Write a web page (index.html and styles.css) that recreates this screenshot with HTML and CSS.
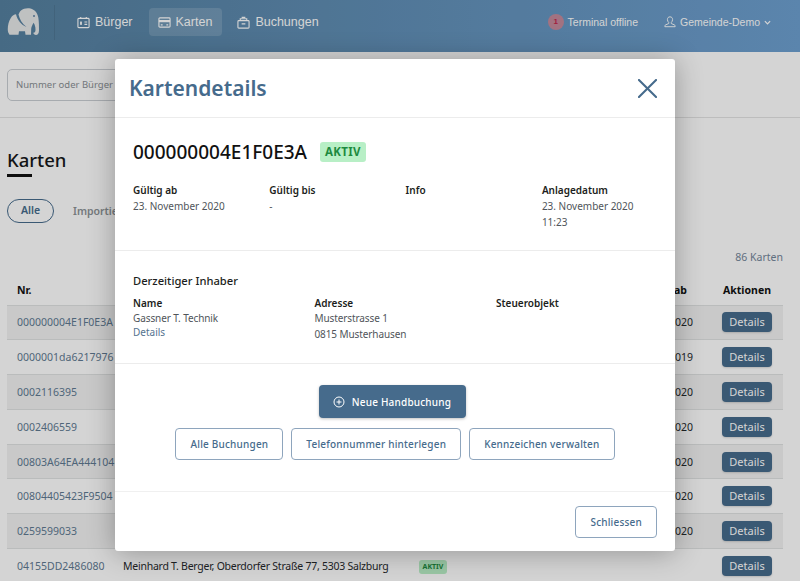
FILE: index.html
```html
<!DOCTYPE html>
<html>
  <head>
    <meta charset="utf-8">
    <title>Karten</title>
    <link rel="stylesheet" href="styles.css">
  </head>
  <body>
    <div class="topbar">
      <svg class="logo" viewBox="0 0 33 28" width="33" height="28">
        <path fill="#e6e8e9" d="M14 2.500C16.500 .5 20 -.3 23.500 .5c4 1 7 4 7.800 9 .7 4.500 .7 9 .7 13 0 3-1.500 4.500-3 4.500s-2.500-1-2.800-2.200c1.500 .3 2.300-1 2.300-3 0-3-.8-5.500-2-7-1.300 2.500-2 4-2.300 6l-.2 6h-5.500l-.5-3.500h-6l-.5 3.500H2.500C1.500 25 .8 24 .8 22c-.2-4 .8-8.500 3-12 1.500-2.500 3.500-3.500 5.200-3.700 1.500 6 5 10.500 10.500 12.700-4.500-3.500-7-8-8-12.500 .6-1.500 1.400-3 2.500-4z"/>
        <circle cx="27" cy="8" r="1" fill="#5f83a3"/>
      </svg>
      <div class="sep"></div>
      <a class="nav">
        <svg viewBox="0 0 14 14" width="13" height="13" fill="none" stroke="currentColor" stroke-width="1.200"><rect x="1" y="2.500" width="12" height="10" rx="1"/><path d="M4 1v2M10 1v2M8 6.500h3M8 9h3"/><rect x="3.300" y="6" width="2" height="3.500" fill="currentColor" stroke="none"/></svg>
        Bürger
      </a>
      <a class="nav active">
        <svg viewBox="0 0 14 14" width="13" height="13" fill="none" stroke="currentColor" stroke-width="1.200"><rect x="1" y="2" width="12" height="10" rx="1"/><path d="M1 5.500h12" stroke-width="2.400"/><path d="M3 9.500h2M9 9.500h2"/></svg>
        Karten
      </a>
      <a class="nav">
        <svg viewBox="0 0 14 14" width="13" height="13" fill="none" stroke="currentColor" stroke-width="1.200"><rect x="1" y="5" width="12" height="8" rx="1"/><path d="M3.500 5V3h7v2M5 1.500h4M5 8.500h4"/></svg>
        Buchungen
      </a>
      <div class="spacer"></div>
      <div class="terminal"><span class="dot">1</span>Terminal offline</div>
      <div class="user">
        <svg viewBox="0 0 14 14" width="12" height="12" fill="none" stroke="currentColor" stroke-width="1.100"><path d="M7 1c2 0 3 1.300 3 3.200 0 1.500-.7 2.600-1.500 3.300v1.300l3.500 1.500c.6.300 1 .7 1 1.200v1H1v-1c0-.5.400-.9 1-1.200l3.500-1.500V7.500C4.700 6.800 4 5.700 4 4.200 4 2.300 5 1 7 1z"/></svg>
        Gemeinde-Demo
        <svg viewBox="0 0 8 8" width="7" height="7" fill="none" stroke="currentColor" stroke-width="1.400"><path d="M1 2.500l3 3 3-3"/></svg>
      </div>
    </div>

    <div class="searchrow">
      <div class="search">Nummer oder Bürger s</div>
    </div>

    <div class="content">
      <h1 class="title">Karten</h1>
      <div class="tabs">
        <span class="tab on">Alle</span>
        <span class="tab">Importiert</span>
      </div>
      <div class="count">86 Karten</div>
      <table class="list">
        <tr><th class="c-nr">Nr.</th><th class="c-name"></th><th class="c-status"></th><th class="c-date">Gültig ab</th><th class="c-act">Aktionen</th></tr>
        <tr><td><a>000000004E1F0E3A</a></td><td></td><td></td><td class="c-date">23.11.2020</td><td class="c-act"><span class="small">Details</span></td></tr>
        <tr><td><a>0000001da6217976</a></td><td></td><td></td><td class="c-date">04.03.2019</td><td class="c-act"><span class="small">Details</span></td></tr>
        <tr><td><a>0002116395</a></td><td></td><td></td><td class="c-date">23.11.2020</td><td class="c-act"><span class="small">Details</span></td></tr>
        <tr><td><a>0002406559</a></td><td></td><td></td><td class="c-date">23.11.2020</td><td class="c-act"><span class="small">Details</span></td></tr>
        <tr><td><a>00803A64EA444104</a></td><td></td><td></td><td class="c-date">23.11.2020</td><td class="c-act"><span class="small">Details</span></td></tr>
        <tr><td><a>00804405423F9504</a></td><td></td><td></td><td class="c-date">23.11.2020</td><td class="c-act"><span class="small">Details</span></td></tr>
        <tr><td><a>0259599033</a></td><td></td><td></td><td class="c-date">23.11.2020</td><td class="c-act"><span class="small">Details</span></td></tr>
        <tr><td><a>04155DD2486080</a></td><td class="owner">Meinhard T. Berger, Oberdorfer Straße 77, 5303 Salzburg</td><td><span class="badge-sm">AKTIV</span></td><td></td><td class="c-act"><span class="small">Details</span></td></tr>
      </table>
    </div>

    <div class="backdrop"></div>

    <div class="modal">
      <div class="modal-head">
        <h2>Kartendetails</h2>
        <svg viewBox="0 0 20 20" width="19" height="19" fill="none" stroke="#466b8c" stroke-width="2.200" stroke-linecap="round"><path d="M1 1l18 18M19 1L1 19"/></svg>
      </div>
      <div class="sec sec-info">
        <div class="cardno"><span>000000004E1F0E3A</span><span class="badge">AKTIV</span></div>
        <div class="grid4">
          <div><b>Gültig ab</b><p>23. November 2020</p></div>
          <div><b>Gültig bis</b><p>-</p></div>
          <div><b>Info</b></div>
          <div><b>Anlagedatum</b><p>23. November 2020<br>11:23</p></div>
        </div>
      </div>
      <div class="sec sec-owner">
        <h3>Derzeitiger Inhaber</h3>
        <div class="grid3">
          <div><b>Name</b><p>Gassner T. Technik</p><a>Details</a></div>
          <div><b>Adresse</b><p>Musterstrasse 1<br>0815 Musterhausen</p></div>
          <div><b>Steuerobjekt</b></div>
        </div>
      </div>
      <div class="sec sec-actions">
        <button class="btn primary">
          <svg viewBox="0 0 12 12" width="12" height="12" fill="none" stroke="currentColor" stroke-width="1"><circle cx="6" cy="6" r="5"/><path d="M6 3.500v5M3.500 6h5"/></svg>
          Neue Handbuchung
        </button>
        <div class="btnrow">
          <button class="btn">Alle Buchungen</button>
          <button class="btn">Telefonnummer hinterlegen</button>
          <button class="btn">Kennzeichen verwalten</button>
        </div>
      </div>
      <div class="modal-foot"><button class="btn">Schliessen</button></div>
    </div>
  </body>
</html>
```

FILE: styles.css
```css
html, body {
  margin: 0;
  padding: 0;
  height: 581px;
  overflow: hidden;
  background: #fff;
  font-family: "Noto Sans", sans-serif;
  font-size: 11px;
  color: #33373b;
}
.topbar {
  height: 52px;
  display: flex;
  align-items: center;
  padding: 0 29px 8px 7px;
  box-sizing: border-box;
  background: linear-gradient(90deg, #55809f, #6ea0d0);
  font-family: "Liberation Sans", sans-serif;
  color: #fff;
}
.logo { flex: none; }
.sep {
  width: 1px;
  height: 35px;
  margin: 0 13px 0 14px;
  background: rgba(0, 0, 0, .08);
}
.nav {
  display: flex;
  align-items: center;
  gap: 5px;
  height: 28px;
  padding: 0 10px 0 9px;
  margin-right: 6px;
  border-radius: 4px;
  font-size: 12.500px;
}
.nav.active { background: rgba(255, 255, 255, .15); }
.spacer { flex: 1; }
.terminal {
  display: flex;
  align-items: center;
  font-size: 10.500px;
  margin-right: 26px;
}
.dot {
  width: 16px;
  height: 16px;
  margin-right: 4px;
  border-radius: 50%;
  background: #c48a9c;
  color: #c2264a;
  font-size: 8px;
  font-weight: bold;
  text-align: center;
  line-height: 16px;
}
.user {
  display: flex;
  align-items: center;
  gap: 4px;
  font-size: 10.500px;
}
.searchrow {
  height: 66px;
  padding: 17px 7px 0;
  box-sizing: border-box;
  border-bottom: 1px solid #e4e4e4;
}
.search {
  width: 300px;
  height: 32px;
  box-sizing: border-box;
  padding-left: 8px;
  border: 1px solid #c9ced3;
  border-radius: 5px;
  line-height: 30px;
  color: #8a8f94;
  font-size: 9.500px;
  white-space: nowrap;
}
.content { padding: 0 17px 0 7px; }
.title {
  display: inline-block;
  margin: 31px 0 0;
  padding-bottom: 7px;
  font-size: 18.500px;
  font-weight: 500;
  line-height: 21px;
  color: #16181a;
  position: relative;
}
.title::after {
  content: "";
  position: absolute;
  left: 0;
  bottom: 0;
  width: 25px;
  height: 3px;
  background: #111;
}
.tabs {
  display: flex;
  align-items: center;
  gap: 19px;
  margin-top: 22px;
  font-weight: 600;
  font-size: 10.500px;
  color: #8d9296;
}
.tab.on {
  width: 47px;
  height: 24px;
  box-sizing: border-box;
  border: 1.500px solid #466b8c;
  border-radius: 12px;
  text-align: center;
  line-height: 21px;
  color: #466b8c;
}
.count {
  margin-top: 27px;
  height: 25px;
  text-align: right;
  font-size: 10.500px;
  line-height: 15px;
  color: #74869a;
}
.list {
  width: 776px;
  border-collapse: collapse;
  table-layout: fixed;
  color: #26292c;
}
.list th {
  height: 30px;
  padding: 0 10px;
  box-sizing: border-box;
  text-align: left;
  font-size: 10.500px;
  font-weight: 700;
  color: #111;
}
.list td {
  height: 34.800px;
  padding: 0 10px;
  box-sizing: border-box;
  font-size: 10.500px;
  white-space: nowrap;
  border-top: 1px solid #e0e2e3;
}
.list tr:nth-child(even) td { background: #f2f2f2; }
.list a { color: #5f7a92; }
.list .owner { overflow: hidden; letter-spacing: -.25px; }
.c-nr { width: 106px; }
.c-name { width: 296px; }
.c-status { width: 212px; }
.list .c-date { width: 90px; text-align: right; padding-right: 18px; }
.list th.c-date { padding-right: 24px; }
.list .c-act { width: 72px; padding: 0; text-align: center; }
.small {
  display: inline-block;
  width: 50px;
  height: 20px;
  border-radius: 4px;
  background: #466b8c;
  color: #fff;
  font-size: 11px;
  line-height: 20px;
  text-align: center;
  box-shadow: 0 1px 2px rgba(0, 0, 0, .15);
}
.badge-sm {
  display: inline-block;
  width: 28px;
  height: 14px;
  border-radius: 3px;
  background: #b8efc6;
  color: #1d8a3f;
  font-size: 7px;
  font-weight: 700;
  line-height: 14px;
  text-align: center;
}
.backdrop {
  position: absolute;
  left: 0;
  top: 0;
  width: 800px;
  height: 581px;
  background: rgba(0, 0, 0, .17);
}
.modal {
  position: absolute;
  left: 115px;
  top: 59px;
  width: 560px;
  height: 492px;
  display: flex;
  flex-direction: column;
  background: #fff;
  border-radius: 3px;
  box-shadow: 0 2px 28px rgba(0, 0, 0, .3);
}
.modal-head {
  height: 58px;
  flex: none;
  display: flex;
  align-items: center;
  justify-content: space-between;
  padding: 0 18px 0 14px;
  box-sizing: border-box;
}
.modal-head h2 {
  margin: 0;
  font-size: 21px;
  font-weight: 600;
  color: #466b8c;
}
.sec {
  flex: none;
  box-sizing: border-box;
  padding: 0 18px;
  border-top: 1px solid #ececec;
}
.sec b {
  display: block;
  font-size: 10px;
  font-weight: 600;
  line-height: 15px;
  color: #1c1e20;
}
.sec p {
  margin: 0;
  font-size: 10px;
  line-height: 16px;
  color: #50555a;
}
.sec-info { height: 133px; padding-top: 22px; }
.cardno {
  display: flex;
  align-items: center;
  gap: 13px;
  font-size: 19px;
  font-weight: 500;
  line-height: 24px;
  color: #111;
}
.badge {
  padding: 0 5px;
  border-radius: 3px;
  background: #b8efc6;
  color: #1d8a3f;
  font-size: 11.500px;
  font-weight: 700;
  line-height: 20px;
  letter-spacing: .3px;
}
.grid4 {
  display: grid;
  grid-template-columns: repeat(4, 136.300px);
  margin-top: 19px;
}
.sec-owner { height: 113px; padding-top: 22px; }
.sec-owner h3 {
  margin: 0 0 7px;
  font-size: 11.200px;
  font-weight: 500;
  line-height: 16px;
  color: #1c1e20;
}
.grid3 {
  display: grid;
  grid-template-columns: repeat(3, 181.500px);
}
.grid3 p { margin-top: -1px; letter-spacing: -.1px; }
.grid3 a {
  display: block;
  font-size: 10px;
  line-height: 12px;
  color: #557390;
}
.sec-actions {
  height: 128px;
  padding-top: 21px;
  display: flex;
  flex-direction: column;
  align-items: center;
  gap: 10px;
}
.btnrow { display: flex; gap: 8px; }
.btn {
  height: 32px;
  padding: 0 14px;
  display: inline-flex;
  align-items: center;
  background: #fff;
  border: 1px solid #8ea5bd;
  border-radius: 4px;
  font-family: "Noto Sans", sans-serif;
  font-size: 10px;
  font-weight: 500;
  letter-spacing: .2px;
  color: #466b8c;
}
.btn.primary {
  height: 33px;
  padding: 0 15px 0 14px;
  margin-right: 5px;
  gap: 7px;
  border: 0;
  background: #466b8c;
  color: #fff;
  box-shadow: 0 1px 3px rgba(0, 0, 0, .25);
}
.modal-foot {
  flex: 1;
  display: flex;
  align-items: center;
  justify-content: flex-end;
  padding: 0 18px;
  border-top: 1px solid #f0f0f0;
}
```
